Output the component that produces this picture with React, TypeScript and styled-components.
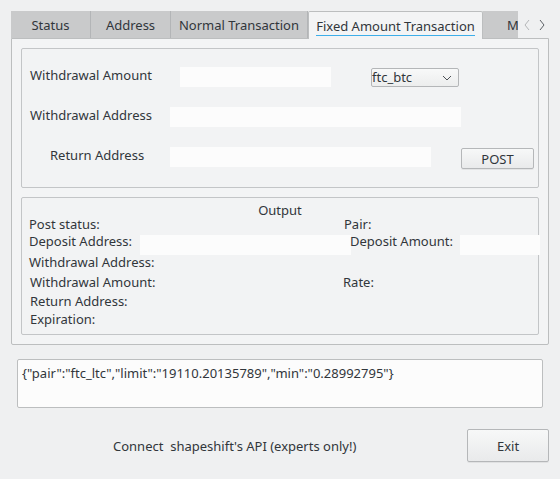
import React from "react";
import styled, { createGlobalStyle } from "styled-components";

const GlobalStyle = createGlobalStyle`
  html, body {
    margin: 0;
    padding: 0;
    background: #eff0f1;
  }
  body {
    font-family: "Noto Sans", "Open Sans", sans-serif;
    font-size: 13px;
    color: #31363b;
  }
  * {
    box-sizing: border-box;
  }
`;

const Window = styled.div`
  width: 560px;
  height: 479px;
  padding: 11px 0 0 11px;
  overflow: hidden;
  background: #eff0f1;
`;

const TabWidget = styled.div`
  width: 538px;
  display: flex;
  flex-direction: column;
`;

const TabBar = styled.div`
  display: flex;
  height: 27px;
  position: relative;
  z-index: 1;
`;

const Tab = styled.div<{ $w: number; $active?: boolean; $clip?: boolean }>`
  flex: none;
  width: ${(p) => p.$w}px;
  height: ${(p) => (p.$active ? 28 : 27)}px;
  display: flex;
  align-items: center;
  justify-content: ${(p) => (p.$clip ? "flex-start" : "center")};
  padding-left: ${(p) => (p.$clip ? 24 : 0)}px;
  padding-top: 1px;
  white-space: nowrap;
  overflow: hidden;
  background: ${(p) => (p.$active ? "#f3f4f5" : "#c9cacb")};
  border: ${(p) => (p.$active ? "1px solid #bcbebf" : "none")};
  border-bottom: none;
  border-right: ${(p) =>
    p.$active ? "1px solid #bcbebf" : p.$clip ? "none" : "1px solid #b3b5b7"};
  border-radius: ${(p) => (p.$active ? "2px 2px 0 0" : "0")};
`;

const ActiveText = styled.span`
  line-height: 18px;
  border-bottom: 1px solid #3daee9;
`;

const Scroller = styled.div`
  flex: none;
  width: 31px;
  display: flex;
  align-items: center;
  justify-content: space-between;
  padding: 0 3px 0 5px;
  background: #eff0f1;
`;

const Pane = styled.div`
  height: 307px;
  border: 1px solid #bcbebf;
  border-radius: 0 0 2px 2px;
  background: #f3f4f5;
  padding: 9px 9px 0 9px;
  display: flex;
  flex-direction: column;
  gap: 9px;
`;

const GroupBox = styled.div<{ $h: number }>`
  height: ${(p) => p.$h}px;
  border: 1px solid #c3c5c7;
  border-radius: 2px;
  background: #f2f3f4;
`;

const FormBody = styled.div`
  padding: 18px 0 0 8px;
  display: flex;
  flex-direction: column;
  gap: 20px;
`;

const FormRow = styled.div`
  display: flex;
  align-items: flex-start;
  height: 20px;
`;

const FieldLabel = styled.div<{ $w: number; $indent?: number }>`
  flex: none;
  width: ${(p) => p.$w}px;
  padding-left: ${(p) => p.$indent ?? 0}px;
  line-height: 16px;
  white-space: nowrap;
`;

const LineEdit = styled.div<{ $w: number; $ml?: number; $mt?: number }>`
  flex: none;
  width: ${(p) => p.$w}px;
  height: 20px;
  margin-left: ${(p) => p.$ml ?? 0}px;
  margin-top: ${(p) => p.$mt ?? 0}px;
  align-self: flex-start;
  background: #fcfcfc;
`;

const Combo = styled.div`
  flex: none;
  width: 88px;
  height: 19px;
  margin-left: 40px;
  margin-top: 1px;
  border: 1px solid #b4b6b8;
  border-radius: 2px;
  background: linear-gradient(#f8f9f9, #eceded);
  display: flex;
  align-items: center;
  justify-content: space-between;
  padding-right: 6px;
  line-height: 17px;
`;

const PushButton = styled.button<{ $w: number; $h: number; $ml?: number; $mt?: number }>`
  flex: none;
  width: ${(p) => p.$w}px;
  height: ${(p) => p.$h}px;
  margin-left: ${(p) => (p.$ml === undefined ? "auto" : `${p.$ml}px`)};
  margin-top: ${(p) => p.$mt ?? 0}px;
  padding: 0;
  border: 1px solid #b5b7b9;
  border-radius: 2px;
  background: linear-gradient(#f7f8f8, #e9eaeb);
  box-shadow: 0 1px 0 rgba(0, 0, 0, 0.06);
  font: inherit;
  color: #31363b;
`;

const OutputBody = styled.div`
  padding: 5px 0 0 7px;
`;

const GroupTitle = styled.div`
  height: 14px;
  line-height: 14px;
  text-align: center;
  margin-right: 7px;
`;

const OutputGrid = styled.div`
  display: grid;
  grid-template-columns: 111px 203px 117px 80px;
  grid-template-rows: 14px 20px 21px 20px 18px 18px;
`;

const OutLabel = styled.div<{ $dx?: number; $col?: number }>`
  grid-column: ${(p) => p.$col ?? 1} / span ${(p) => (p.$col ? 1 : 2)};
  margin-left: ${(p) => p.$dx ?? 0}px;
  align-self: center;
  line-height: 18px;
  white-space: nowrap;
  position: relative;
`;

const OutField = styled(LineEdit)<{ $col: number }>`
  grid-column: ${(p) => p.$col};
`;

const Spacer = styled.span`
  grid-column: 3 / span 2;
`;

const Response = styled.div`
  width: 526px;
  height: 49px;
  margin: 14px 0 0 6px;
  border: 1px solid #bcbebf;
  border-radius: 2px;
  background: #fcfcfc;
  padding: 4px 4px;
  line-height: 18px;
  white-space: nowrap;
`;

const BottomBar = styled.div`
  width: 538px;
  height: 33px;
  margin-top: 21px;
  display: flex;
  align-items: center;
`;

const Notice = styled.div`
  margin-left: 102px;
  white-space: pre;
`;

const Chevron = ({ dir, color }: { dir: "left" | "right" | "down"; color: string }) => {
  const d =
    dir === "left" ? "M6 1 L2 6 L6 11" : dir === "right" ? "M2 1 L6 6 L2 11" : "M1 2 L5 6 L9 2";
  const w = dir === "down" ? 10 : 8;
  const h = dir === "down" ? 8 : 12;
  return (
    <svg width={w} height={h} viewBox={`0 0 ${w} ${h}`}>
      <path d={d} fill="none" stroke={color} strokeWidth="1" />
    </svg>
  );
};

export default function App() {
  return (
    <Window>
      <GlobalStyle />
      <TabWidget>
        <TabBar>
          <Tab $w={80}>Status</Tab>
          <Tab $w={80}>Address</Tab>
          <Tab $w={137}>Normal Transaction</Tab>
          <Tab $w={175} $active>
            <ActiveText>Fixed Amount Transaction</ActiveText>
          </Tab>
          <Tab $w={35} $clip>
            More
          </Tab>
          <Scroller>
            <Chevron dir="left" color="#b4b6b8" />
            <Chevron dir="right" color="#5c6166" />
          </Scroller>
        </TabBar>
        <Pane>
          <GroupBox $h={140}>
            <FormBody>
              <FormRow>
                <FieldLabel $w={150}>Withdrawal Amount</FieldLabel>
                <LineEdit $w={151} />
                <Combo>
                  <span>ftc_btc</span>
                  <Chevron dir="down" color="#4d5257" />
                </Combo>
              </FormRow>
              <FormRow>
                <FieldLabel $w={140}>Withdrawal Address</FieldLabel>
                <LineEdit $w={291} />
              </FormRow>
              <FormRow>
                <FieldLabel $w={140} $indent={20}>
                  Return Address
                </FieldLabel>
                <LineEdit $w={261} />
                <PushButton $w={73} $h={21} $ml={30} $mt={1}>
                  POST
                </PushButton>
              </FormRow>
            </FormBody>
          </GroupBox>
          <GroupBox $h={138}>
            <OutputBody>
              <GroupTitle>Output</GroupTitle>
              <OutputGrid>
                <OutLabel>Post status:</OutLabel>
                <OutLabel $col={3} $dx={1}>
                  Pair:
                </OutLabel>

                <OutLabel $col={1}>Deposit Address:</OutLabel>
                <OutField $col={2} $w={211} $mt={4} />
                <OutLabel $col={3} $dx={7}>
                  Deposit Amount:
                </OutLabel>
                <OutField $col={4} $w={80} $mt={4} />

                <OutLabel>Withdrawal Address:</OutLabel>
                <Spacer />

                <OutLabel $dx={1}>Withdrawal Amount:</OutLabel>
                <OutLabel $col={3}>Rate:</OutLabel>

                <OutLabel $dx={1}>Return Address:</OutLabel>
                <Spacer />

                <OutLabel $dx={1}>Expiration:</OutLabel>
              </OutputGrid>
            </OutputBody>
          </GroupBox>
        </Pane>
      </TabWidget>
      <Response>{'{"pair":"ftc_ltc","limit":"19110.20135789","min":"0.28992795"}'}</Response>
      <BottomBar>
        <Notice>Connect  shapeshift's API (experts only!)</Notice>
        <PushButton $w={82} $h={33}>
          Exit
        </PushButton>
      </BottomBar>
    </Window>
  );
}
